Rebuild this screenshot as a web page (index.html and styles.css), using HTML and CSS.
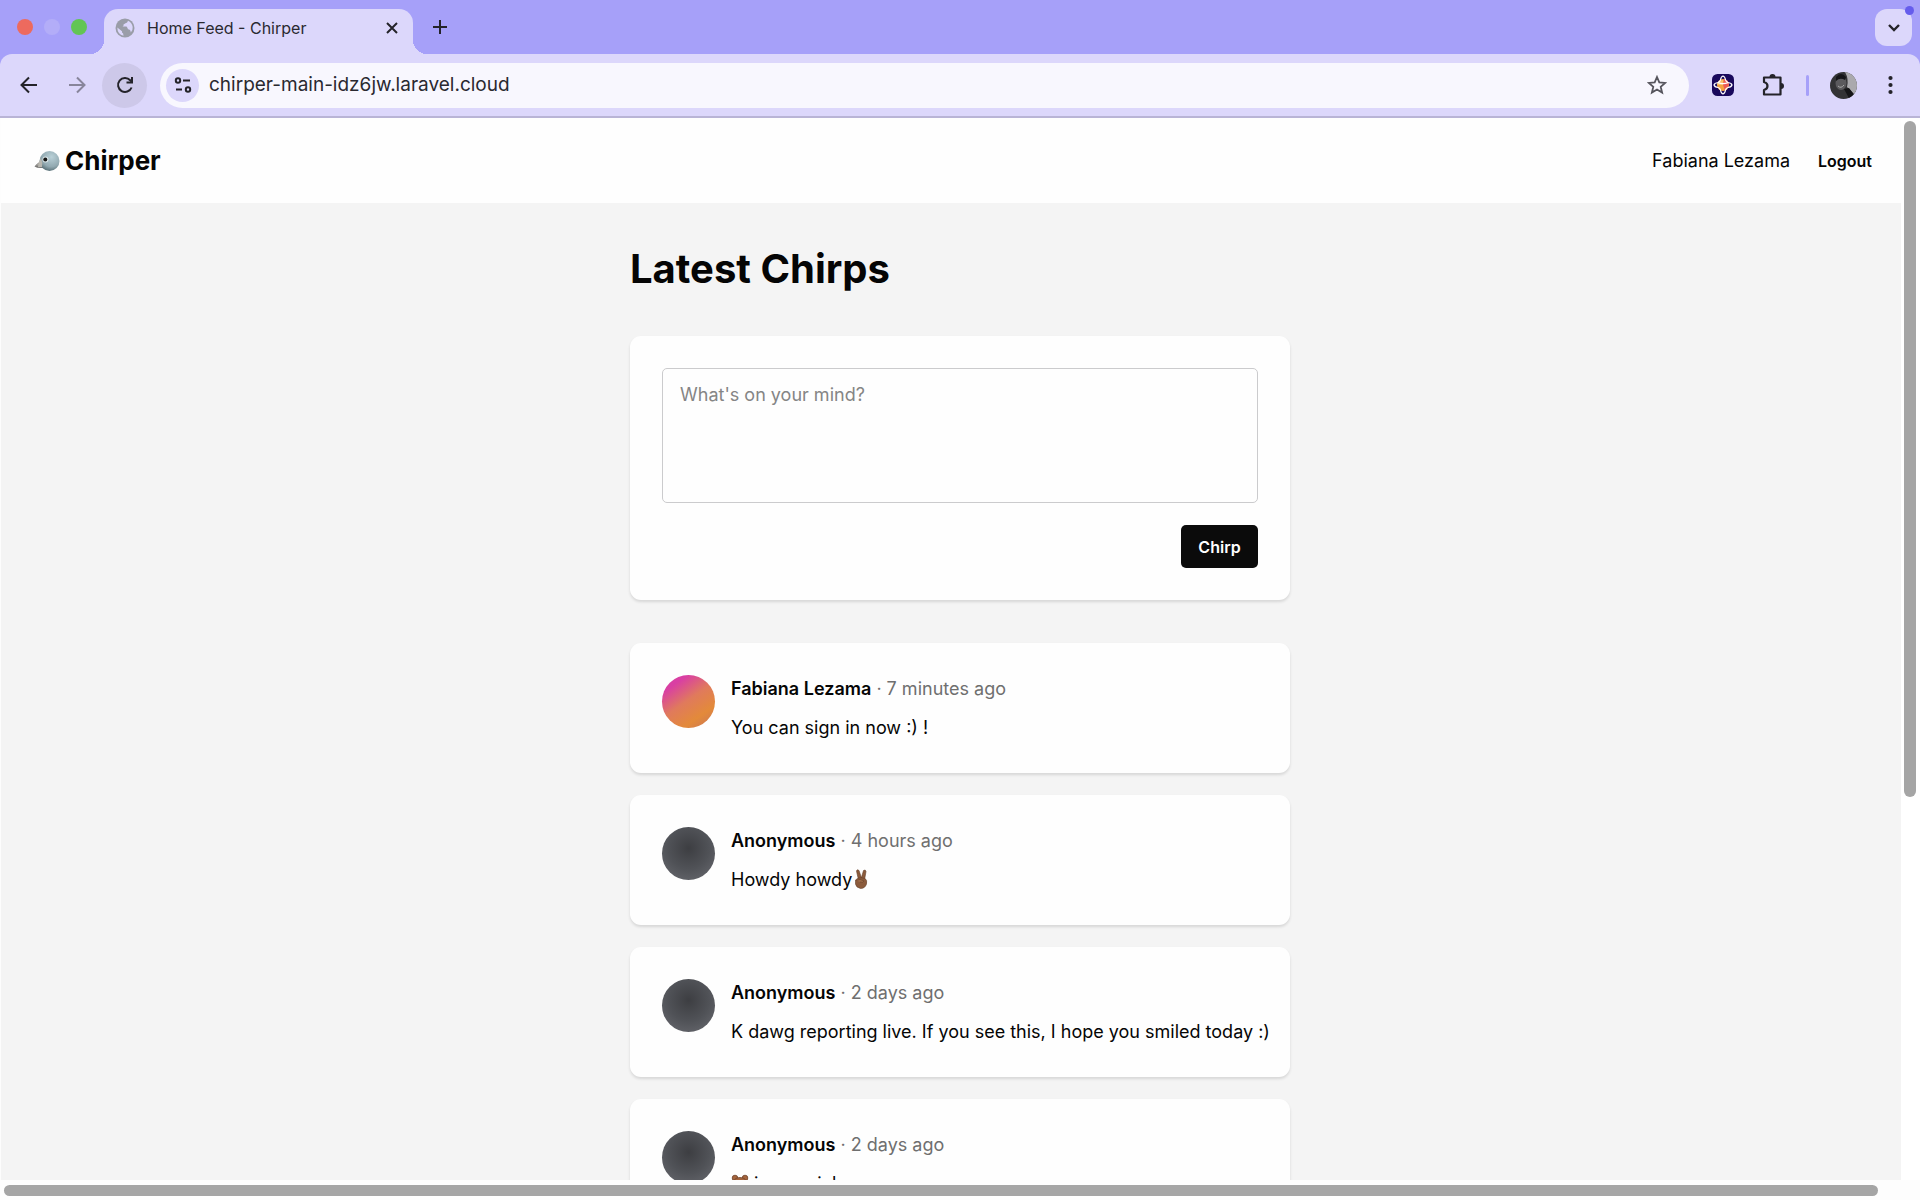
FILE: index.html
```html
<!DOCTYPE html>
<html lang="en">
<head>
<meta charset="utf-8">
<title>Home Feed - Chirper</title>
<link rel="stylesheet" href="styles.css">
</head>
<body>
<div class="browser">
  <div class="tabstrip">
    <div class="lights"><span class="light red"></span><span class="light dim"></span><span class="light green"></span></div>
    <div class="tab">
      <svg class="globe" viewBox="0 0 20 20"><circle cx="10" cy="10" r="9.500" fill="#9a9da8"/><path d="M12.500 2.500Q12 4 10 4.200Q9.500 6 7.800 6.200Q8 8 6.500 8.500H10Q11.500 9 11.500 11H9.500V13Q7.500 13.500 7.500 15.500V17.800Q2.500 16 2.200 10.500L6.500 13V11.500Q8 11 7 10L3 7.500Q5.500 1.500 12.500 2.500Z" fill="#9a9da8"/><path d="M2.300 9.500 7 13.200V14.500Q8.500 15 8.500 17.700Q2.500 16.500 2.300 9.500ZM13 2.800Q12.500 5 10.500 5.200L8.500 6.500Q9 8.200 7.500 8.500H11.500Q12.500 9.500 13 11.300Q15.500 11.300 15.800 14.500Q18 12 17.700 9Q17 4.500 13 2.800Z" fill="#dcd7fb"/></svg>
      <span class="tab-title">Home Feed - Chirper</span>
      <button class="plain" aria-label="Close tab"><svg width="12" height="12" viewBox="0 0 12 12"><path d="M1 1 11 11M11 1 1 11" class="ink"/></svg></button>
    </div>
    <button class="plain new-tab" aria-label="New tab"><svg width="14" height="14" viewBox="0 0 14 14"><path d="M7 0V14M0 7H14" class="ink"/></svg></button>
    <button class="tab-search" aria-label="Search tabs"><svg width="12" height="8" viewBox="0 0 12 8"><path d="M1 1 6 6 11 1" class="ink medium"/></svg><span class="notice"></span></button>
  </div>
  <div class="toolbar">
    <button class="round" aria-label="Back"><svg width="18" height="18" viewBox="0 0 18 18"><path d="M17 9H2M9 1.500 1.500 9 9 16.500" class="ink"/></svg></button>
    <button class="round faded" aria-label="Forward"><svg width="18" height="18" viewBox="0 0 18 18"><path d="M1 9H16M9 1.500 16.500 9 9 16.500" class="ink"/></svg></button>
    <button class="round hover" aria-label="Reload"><svg width="18" height="18" viewBox="0 0 18 18"><path d="M15.600 11.500A7 7 0 1 1 14.200 4.200L16 6.500" class="ink"/><path d="M17 1V7.500H10.500V5.500H15V1Z" fill="#242329"/></svg></button>
    <div class="omnibox">
      <button class="site-info" aria-label="Site information"><svg width="18" height="16" viewBox="0 0 18 16"><g class="ink"><circle cx="4" cy="3.500" r="2.200"/><path d="M9 3.500H16M2 12.500H8"/><circle cx="14" cy="12.500" r="2.200"/></g></svg></button>
      <input class="url" type="text" aria-label="Address" value="chirper-main-idz6jw.laravel.cloud">
      <button class="plain" aria-label="Bookmark"><svg width="20" height="20" viewBox="0 0 20 20"><path d="M10 2 12.300 7.400 18.200 7.900 13.700 11.800 15.100 17.600 10 14.500 4.900 17.600 6.300 11.800 1.800 7.900 7.700 7.400Z" fill="none" stroke="#56555d" stroke-width="1.800"/></svg></button>
    </div>
    <button class="plain ext" aria-label="Extension"><svg width="22" height="22" viewBox="0 0 22 22"><rect width="22" height="22" rx="5.500" fill="#19085c"/><circle cx="11" cy="11" r="6" fill="#f5a33f"/><path d="M12 5Q17 6 17 11L13 16.500 11 11Z" fill="#ee5b55"/><path d="M5.500 9Q8 5.500 11 6V11H5Z" fill="#f9c26a"/><g fill="none" stroke="#fff" stroke-width="1.200" stroke-linejoin="round"><path d="M8.500 6 Q9 2.500 11 2Q13 2.500 13.500 6M8.500 16Q9 19.500 11 20Q13 19.500 13.500 16M6 8.500Q2.500 9 2 11Q2.500 13 6 13.500M16 8.500Q19.500 9 20 11Q19.500 13 16 13.500M6 8.800Q11 10.500 16 8.800M13.500 6Q14 7.500 16 8.500M8.500 6Q8 7.500 6 8.500M6 13.500Q8 14 8.500 16M16 13.500Q14 14 13.500 16"/></g></svg></button>
    <button class="plain puzzle" aria-label="Extensions"><svg width="24" height="24" viewBox="0 0 24 24"><path d="M3 4.500H19.500V21.500H3V17Q6.500 16 6.500 13T3 9Z" fill="none" stroke="#242329" stroke-width="2.200" stroke-linejoin="round"/><path d="M8.500 4A3 3 0 0 1 14.500 4ZM20 10A3 3 0 0 1 20 16Z" fill="#242329"/></svg></button>
    <span class="divider"></span>
    <button class="plain profile" aria-label="Profile"><svg width="27" height="27" viewBox="0 0 27 27"><defs><clipPath id="pc"><circle cx="13.500" cy="13.500" r="13.500"/></clipPath></defs><g clip-path="url(#pc)"><rect width="27" height="27" fill="#333335"/><path d="M15 0H27V27L23 21 17 15Q19 7 15 0Z" fill="#aaa9ad"/><ellipse cx="11" cy="11" rx="5.500" ry="7" fill="#5b5a5d"/><path d="M6 5Q11-1 16 5L15 8Q10 5 6 9ZM14 17 19 16 26 25 20 28Z" fill="#151517"/><path d="M8 14Q11 17 14 13" stroke="#aaa" fill="none"/></g></svg></button>
    <button class="plain menu" aria-label="Menu"><svg width="5" height="20" viewBox="0 0 5 20"><g fill="#242329"><circle cx="2.500" cy="3" r="2.100"/><circle cx="2.500" cy="10" r="2.100"/><circle cx="2.500" cy="17" r="2.100"/></g></svg></button>
  </div>
  <div class="viewport">
    <div class="page">
      <nav class="navbar">
        <a class="brand" href="#"><svg width="26" height="22" viewBox="0 0 26 22"><defs><radialGradient id="bird" cx=".6" cy=".3" r=".75"><stop offset="0" stop-color="#b9d0d7"/><stop offset=".65" stop-color="#92a9b1"/><stop offset="1" stop-color="#526970"/></radialGradient></defs><path d="M10 9Q3 13 .5 16.500Q4 19 12 17.500Z" fill="#7b7a78"/><path d="M9 10Q4 13 2 15.500L10 15.500Z" fill="#aaa8a2"/><circle cx="15.500" cy="11" r="10" fill="url(#bird)"/><path d="M7 8Q9 13 8 17L4 17 5 12Z" fill="#b9b7b0"/><circle cx="11.500" cy="9.500" r="3" fill="#d9e4e6"/><circle cx="11.300" cy="9.500" r="2" fill="#141414"/></svg><span>Chirper</span></a>
        <span class="user">Fabiana Lezama</span>
        <button class="logout">Logout</button>
      </nav>
      <main class="feed">
        <h1>Latest Chirps</h1>
        <form class="card composer">
          <textarea aria-label="Message" placeholder="What's on your mind?"></textarea>
          <button type="button" class="submit">Chirp</button>
        </form>
        <div class="chirps">
          <article class="card chirp"><span class="avatar sunset"></span><div><p class="meta"><b>Fabiana Lezama</b> · 7 minutes ago</p><p class="message">You can sign in now :) !</p></div></article>
          <article class="card chirp"><span class="avatar"></span><div><p class="meta"><b>Anonymous</b> · 4 hours ago</p><p class="message">Howdy howdy<svg class="emoji" viewBox="0 0 18 20"><g fill="#8b5b3c" stroke="#65402a" stroke-width=".6"><path d="M6.500 11 4.500 2Q5-.2 7 1.500L9.500 9ZM9 10 11.500 1.500Q13.500 0 14 2.500L12.500 11Z"/><path d="M3.500 11Q7 7.500 13 9.500Q15.500 11 14.500 15Q13 19.500 8.500 19.500Q4 18.500 3.500 15Z"/><path d="M4 11.500Q8 9 12 12Q11 14 8 13" fill="#a06d4a"/></g></svg></p></div></article>
          <article class="card chirp"><span class="avatar"></span><div><p class="meta"><b>Anonymous</b> · 2 days ago</p><p class="message">K dawg reporting live. If you see this, I hope you smiled today :)</p></div></article>
          <article class="card chirp"><span class="avatar"></span><div><p class="meta"><b>Anonymous</b> · 2 days ago</p><p class="message"><svg class="emoji" viewBox="0 0 18 20"><g fill="#a5653d" stroke="#6e4128" stroke-width=".8"><circle cx="4" cy="5" r="2.800"/><circle cx="14" cy="5" r="2.800"/><path d="M2 12Q2 4.500 9 4.500T16 12Q15 19 9 19T2 12Z"/></g><circle cx="6.500" cy="10" r="1"/><circle cx="11.500" cy="10" r="1"/><ellipse cx="9" cy="14" rx="3.500" ry="3" fill="#d9a878"/></svg> is our pick</p></div></article>
        </div>
      </main>
    </div>
    <div class="track vertical"><span class="thumb"></span></div>
    <div class="track horizontal"><span class="thumb"></span></div>
  </div>
</div>
</body>
</html>
```
FILE: styles.css
```css
* { box-sizing: border-box; }
body { margin: 0; font-family: Inter, "Liberation Sans", sans-serif; color: #050505; }
button { font: inherit; color: inherit; border: 0; padding: 0; background: none; display: flex; align-items: center; justify-content: center; }
svg { display: block; flex: none; }
.ink { fill: none; stroke: #242329; stroke-width: 2; }
.ink.medium { stroke-width: 2.400; }
.browser { height: 100vh; display: flex; flex-direction: column; overflow: hidden; background: #a6a0f9; }

.tabstrip { height: 54px; flex: none; display: flex; align-items: flex-end; position: relative; padding-right: 8px; }
.lights { display: flex; gap: 11px; padding: 0 17px 19px; width: 104px; }
.light { width: 16px; height: 16px; border-radius: 50%; }
.red { background: #ed6a5e; }
.dim { background: #b3adf8; }
.green { background: #62c554; }
.tab { width: 309px; height: 45px; display: flex; align-items: center; padding: 0 15px 8px 11px; background: #dcd7fb; border-radius: 14px 14px 0 0; position: relative; }
.tab::before, .tab::after { content: ""; position: absolute; bottom: 0; width: 14px; height: 14px; }
.tab::before { right: 100%; background: radial-gradient(circle at 0 0, transparent 14px, #dcd7fb 14px); }
.tab::after { left: 100%; background: radial-gradient(circle at 100% 0, transparent 14px, #dcd7fb 14px); }
.globe { width: 20px; height: 20px; margin-right: 12px; }
.tab-title { flex: 1; font-size: 16px; line-height: 20px; color: #2a2930; }
.new-tab { margin: 0 auto 20px 20px; }
.tab-search { width: 37px; height: 37px; border-radius: 12px; background: #dcd7fb; margin-bottom: 8px; position: relative; }
.notice { position: absolute; top: -3px; right: -2px; width: 9px; height: 9px; border-radius: 50%; background: #655cec; }

.toolbar { height: 64px; flex: none; display: flex; align-items: center; padding: 0 27px 0 6px; background: #dcd7fb; border-bottom: 2px solid #b9b4d6; border-radius: 12px 12px 0 0; }
.round { width: 45px; height: 45px; border-radius: 50%; margin-right: 3px; }
.faded { opacity: .45; }
.hover { background: #cdc8e9; }
.omnibox { flex: 1; height: 45px; display: flex; align-items: center; border-radius: 23px; margin: 0 23px 0 10px; padding: 0 22px 0 6px; background: #f8f7fe; }
.site-info { width: 33px; height: 33px; border-radius: 50%; background: #dcd7fb; }
.url { flex: 1; min-width: 0; margin-left: 10px; padding: 0; border: 0; outline: 0; background: none; color: #2a2930; font: 19px/24px Inter, "Liberation Sans", sans-serif; }
.puzzle { margin-left: 27px; }
.divider { width: 3px; height: 21px; border-radius: 2px; background: #a6a0f9; margin: 0 21px 0 21px; }
.menu { margin-left: 31px; }

.viewport { flex: 1; min-height: 0; display: grid; grid-template: minmax(0, 1fr) 20px / minmax(0, 1fr) 19px; background: #fdfdfd; }
.page { margin-left: 1px; background: #f4f4f4; overflow: hidden; }
.track { padding: 3px; }
.vertical { background: #fff; }
.thumb { display: block; border-radius: 6px; background: #a5a5a5; }
.vertical .thumb { width: 12px; height: 64%; }
.horizontal { padding: 5px 4px; }
.horizontal .thumb { width: 99%; height: 11px; }

.navbar { height: 85px; display: flex; align-items: center; padding: 0 29px 0 33px; background: #fefefe; }
.brand { display: flex; align-items: center; gap: 5px; margin-right: auto; color: inherit; text-decoration: none; font-size: 26px; line-height: 32px; font-weight: 700; }
.user { font-size: 18px; line-height: 24px; }
.logout { margin-left: 28px; font-size: 16px; line-height: 20px; font-weight: 600; }

.feed { width: 678px; max-width: 100%; margin: 0 auto; padding: 40px 0 0 18px; }
h1 { margin: 0; font-size: 40px; line-height: 52px; font-weight: 700; }
.card { background: #fefefe; border-radius: 11px; padding: 32px; box-shadow: 0 2px 3px rgba(0, 0, 0, .12); }
.composer { margin-top: 41px; height: 264px; display: flex; flex-direction: column; align-items: flex-end; gap: 22px; }
textarea { width: 100%; height: 135px; resize: none; padding: 13px 17px; border: 1px solid #cbcbcd; border-radius: 5px; outline: 0; background: none; font: 18px/26px Inter, "Liberation Sans", sans-serif; }
textarea::placeholder { color: #858585; }
.submit { width: 77px; height: 43px; border-radius: 5px; background: #0b0b0b; color: #fff; font-size: 16px; font-weight: 600; }
.chirps { margin-top: 43px; display: flex; flex-direction: column; gap: 22px; }
.chirp { height: 130px; display: flex; gap: 16px; }
.avatar { width: 53px; height: 53px; flex: none; border-radius: 50%; background: radial-gradient(circle at 50% 40%, #3d3e42, #505257 50%, #6b6c72); }
.sunset { background: linear-gradient(145deg, #d93fa3 20%, #e07a5c 48%, #e38a3a 75%, #c8745a); }
p { margin: 0; font-size: 18px; line-height: 28px; white-space: nowrap; }
.meta { color: #6f6f6f; }
.meta b { font-weight: 600; color: #050505; }
.message { margin-top: 11px; }
.emoji { display: inline-block; width: 18px; height: 20px; vertical-align: -3px; }
```
